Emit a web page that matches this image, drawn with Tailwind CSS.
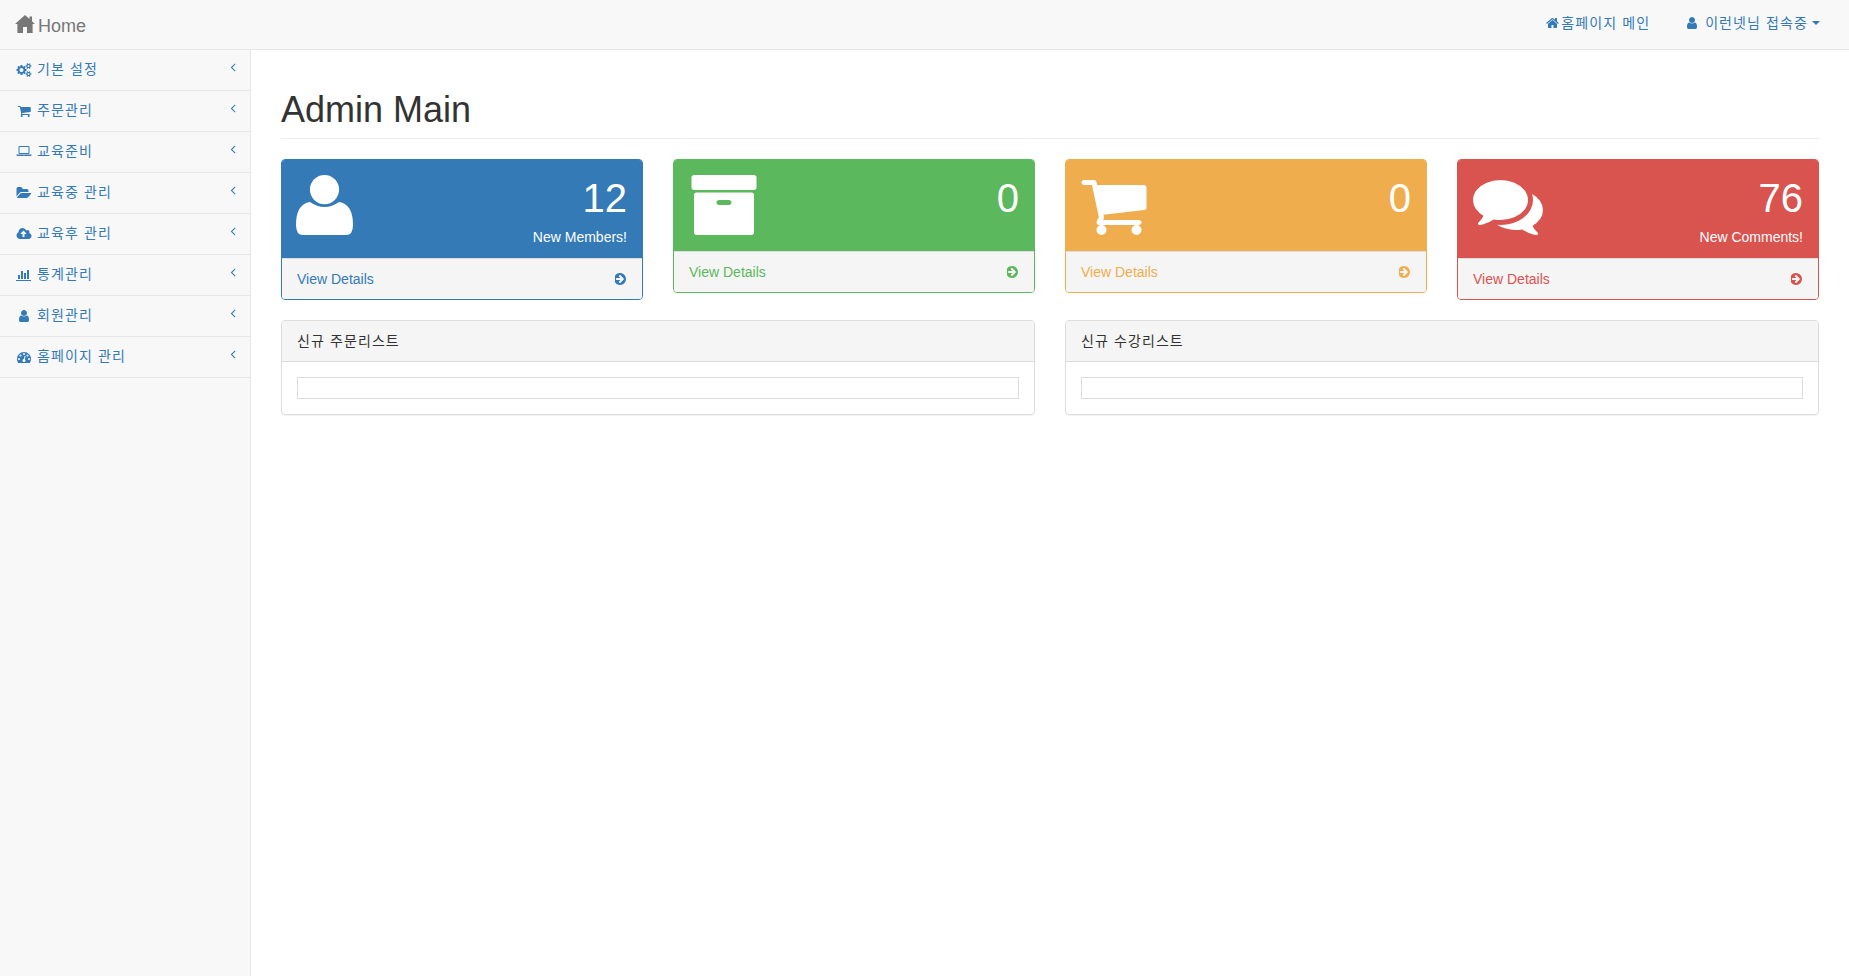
<!DOCTYPE html>
<html lang="ko">
<head>
<meta charset="utf-8">
<title>Admin Main</title>
<script src="https://cdn.jsdelivr.net/npm/@tailwindcss/browser@4"></script>
</head>
<body class="bg-white text-[14px] text-[#333] font-['Liberation_Sans','Noto_Sans_CJK_KR',sans-serif] overflow-hidden">
<div class="h-[976px] flex flex-col">
  <nav class="h-[50px] shrink-0 flex items-center justify-between bg-[#f8f8f8] border-b border-[#e7e7e7] pl-[15px] pr-[29px]">
    <a class="flex items-center text-[18px] text-[#777]">
      <svg class="w-[20px] h-[18px] mt-[-1px]" viewBox="0 0 20 18" fill="#777"><path d="M10 0 L14.5 4 V1.5 H17 V6.2 L20 9 H17.6 V18 H12 V12 H8 V18 H2.4 V9 H0 Z"/></svg>
      <span class="ml-[3px] mt-[3px]">Home</span>
    </a>
    <div class="flex items-center text-[#337ab7] mt-[-3px]">
      <svg class="w-[13px] h-[14px] fill-[#337ab7]" viewBox="100 0 1600 1792"><path d="M1472 992v480q0 26-19 45t-45 19h-384v-384h-256v384h-384q-26 0-45-19t-19-45v-480q0-1 .5-3t.5-3l575-474 575 474q1 2 1 6zm223-69l-62 74q-8 9-21 11h-3q-13 0-21-7l-692-577-692 577q-12 8-24 7-13-2-21-11l-62-74q-8-10-7-23.5t11-21.5l719-599q32-26 76-26t76 26l244 204v-195q0-14 9-23t23-9h192q14 0 23 9t9 23v408l219 182q10 8 11 21.5t-7 23.5z"/></svg>
      <span class="ml-[2px] tracking-[1.1px]">홈페이지 메인</span>
      <svg class="ml-[35px] w-[14px] h-[14px] fill-[#337ab7]" viewBox="0 0 1792 1792"><path d="M1536 1399q0 109-62.5 187t-150.5 78h-854q-88 0-150.5-78t-62.5-187q0-85 8.5-160.5t31.5-152 58.5-131 94-89 134.5-34.5q131 128 313 128t313-128q76 0 134.5 34.5t94 89 58.5 131 31.5 152 8.5 160.5zm-256-887q0 159-112.5 271.5t-271.5 112.5-271.5-112.5-112.5-271.5 112.5-271.5 271.5-112.5 271.5 112.5 112.5 271.5z"/></svg>
      <span class="ml-[6px] tracking-[1.1px]">이런넷님 접속중</span>
      <span class="ml-[4px] w-0 h-0 border-x-[4px] border-x-transparent border-t-[4px] border-t-[#337ab7]"></span>
    </div>
  </nav>
  <div class="flex flex-1 min-h-0">
    <aside class="w-[251px] shrink-0 bg-[#f8f8f8] border-r border-[#e7e7e7] text-[#337ab7]">
      <a class="flex items-center h-[41px] border-b border-[#e7e7e7] pl-[16px] pr-[10px]">
        <svg class="w-[16px] h-[14px] fill-[#337ab7]" viewBox="0 0 1920 1792"><path d="M896 896q0-106-75-181t-181-75-181 75-75 181 75 181 181 75 181-75 75-181zm768 512q0-52-38-90t-90-38-90 38-38 90q0 53 37.5 90.5t90.5 37.5 90.5-37.5 37.5-90.5zm0-1024q0-52-38-90t-90-38-90 38-38 90q0 53 37.5 90.5t90.5 37.5 90.5-37.5 37.5-90.5zm-384 421v185q0 10-7 19.5t-16 10.5l-155 24q-11 35-32 76 34 48 90 115 7 11 7 20 0 12-7 19-23 30-82.5 89.5t-78.5 59.5q-11 0-21-7l-115-90q-37 19-77 31-11 108-23 155-7 24-30 24h-186q-11 0-20-7.5t-10-17.5l-23-153q-34-10-75-31l-118 89q-7 7-20 7-11 0-21-8-144-133-144-160 0-9 7-19 10-14 41-53t47-61q-23-44-35-82l-152-24q-10-1-17-9.5t-7-19.5v-185q0-10 7-19.5t16-10.5l155-24q11-35 32-76-34-48-90-115-7-11-7-20 0-12 7-20 22-30 82-89t79-59q11 0 21 7l115 90q34-18 77-32 11-108 23-154 7-24 30-24h186q11 0 20 7.5t10 17.5l23 153q34 10 75 31l118-89q8-7 20-7 11 0 21 8 144 133 144 160 0 8-7 19-12 16-42 54t-45 60q23 48 34 82l152 23q10 2 17 10.5t7 19.5zm640 533v140q0 16-149 31-12 27-30 52 51 113 51 138 0 4-4 7-122 71-124 71-8 0-46-47t-52-68q-20 2-30 2t-30-2q-14 21-52 68t-46 47q-2 0-124-71-4-3-4-7 0-25 51-138-18-25-30-52-149-15-149-31v-140q0-16 149-31 13-29 30-52-51-113-51-138 0-4 4-7 4-2 35-20t59-34 30-16q8 0 46 46.5t52 67.5q20-2 30-2t30 2q51-71 92-112l6-2q4 0 124 70 4 3 4 7 0 25-51 138 17 23 30 52 149 15 149 31zm0-1024v140q0 16-149 31-12 27-30 52 51 113 51 138 0 4-4 7-122 71-124 71-8 0-46-47t-52-68q-20 2-30 2t-30-2q-14 21-52 68t-46 47q-2 0-124-71-4-3-4-7 0-25 51-138-18-25-30-52-149-15-149-31v-140q0-16 149-31 13-29 30-52-51-113-51-138 0-4 4-7 4-2 35-20t59-34 30-16q8 0 46 46.5t52 67.5q20-2 30-2t30 2q51-71 92-112l6-2q4 0 124 70 4 3 4 7 0 25-51 138 17 23 30 52 149 15 149 31z"/></svg>
        <span class="ml-[5px] mb-[2px] tracking-[1.1px]">기본 설정</span>
        <svg class="ml-auto w-[14px] h-[14px] mt-[-6px] fill-[#337ab7]" viewBox="0 0 1792 1792"><path d="M1203 544q0 13-10 23l-393 393 393 393q10 10 10 23t-10 23l-50 50q-10 10-23 10t-23-10l-466-466q-10-10-10-23t10-23l466-466q10-10 23-10t23 10l50 50q10 10 10 23z"/></svg>
      </a>
      <a class="flex items-center h-[41px] border-b border-[#e7e7e7] pl-[16px] pr-[10px]">
        <svg class="w-[16px] h-[14px] fill-[#337ab7]" viewBox="-96 0 1920 1792"><path d="M704 1536q0 52-38 90t-90 38-90-38-38-90 38-90 90-38 90 38 38 90zm896 0q0 52-38 90t-90 38-90-38-38-90 38-90 90-38 90 38 38 90zm128-1088v512q0 24-16.5 42.5t-40.5 21.5l-1044 122q13 60 13 70 0 16-24 64h920q26 0 45 19t19 45-19 45-45 19h-1024q-26 0-45-19t-19-45q0-11 8-31.5t16-36 21.5-40 15.5-29.5l-177-823h-204q-26 0-45-19t-19-45 19-45 45-19h256q16 0 28.5 6.5t19.5 15.5 13 24.5 8 26 5.5 29.5 4.5 26h1201q26 0 45 19t19 45z"/></svg>
        <span class="ml-[5px] mb-[2px] tracking-[1.1px]">주문관리</span>
        <svg class="ml-auto w-[14px] h-[14px] mt-[-6px] fill-[#337ab7]" viewBox="0 0 1792 1792"><path d="M1203 544q0 13-10 23l-393 393 393 393q10 10 10 23t-10 23l-50 50q-10 10-23 10t-23-10l-466-466q-10-10-10-23t10-23l466-466q10-10 23-10t23 10l50 50q10 10 10 23z"/></svg>
      </a>
      <a class="flex items-center h-[41px] border-b border-[#e7e7e7] pl-[16px] pr-[10px]">
        <svg class="w-[16px] h-[14px] fill-[#337ab7]" viewBox="0 0 1920 1792"><path d="M416 1152q-66 0-113-47t-47-113v-704q0-66 47-113t113-47h1088q66 0 113 47t47 113v704q0 66-47 113t-113 47h-1088zm-32-864v704q0 13 9.5 22.5t22.5 9.5h1088q13 0 22.5-9.5t9.5-22.5v-704q0-13-9.5-22.5t-22.5-9.5h-1088q-13 0-22.5 9.5t-9.5 22.5zm1376 928h160v96q0 40-47 68t-113 28h-1600q-66 0-113-28t-47-68v-96h1760zm-720 96q16 0 16-16t-16-16h-160q-16 0-16 16t16 16h160z"/></svg>
        <span class="ml-[5px] mb-[2px] tracking-[1.1px]">교육준비</span>
        <svg class="ml-auto w-[14px] h-[14px] mt-[-6px] fill-[#337ab7]" viewBox="0 0 1792 1792"><path d="M1203 544q0 13-10 23l-393 393 393 393q10 10 10 23t-10 23l-50 50q-10 10-23 10t-23-10l-466-466q-10-10-10-23t10-23l466-466q10-10 23-10t23 10l50 50q10 10 10 23z"/></svg>
      </a>
      <a class="flex items-center h-[41px] border-b border-[#e7e7e7] pl-[16px] pr-[10px]">
        <svg class="w-[16px] h-[14px] fill-[#337ab7]" viewBox="0 0 1920 1792"><path d="M1879 952q0 31-31 66l-336 396q-43 51-120.5 86.5t-143.5 35.5h-1088q-34 0-60.5-13t-26.5-43q0-31 31-66l336-396q43-51 120.5-86.5t143.5-35.5h1088q34 0 60.5 13t26.5 43zm-343-344v160h-832q-94 0-197 47.5t-164 119.5l-337 396-5 6q0-4-.5-12.5t-.5-12.5v-960q0-92 66-158t158-66h320q92 0 158 66t66 158v32h544q92 0 158 66t66 158z"/></svg>
        <span class="ml-[5px] mb-[2px] tracking-[1.1px]">교육중 관리</span>
        <svg class="ml-auto w-[14px] h-[14px] mt-[-6px] fill-[#337ab7]" viewBox="0 0 1792 1792"><path d="M1203 544q0 13-10 23l-393 393 393 393q10 10 10 23t-10 23l-50 50q-10 10-23 10t-23-10l-466-466q-10-10-10-23t10-23l466-466q10-10 23-10t23 10l50 50q10 10 10 23z"/></svg>
      </a>
      <a class="flex items-center h-[41px] border-b border-[#e7e7e7] pl-[16px] pr-[10px]">
        <svg class="w-[16px] h-[14px] fill-[#337ab7]" viewBox="0 0 1920 1792"><path d="M1280 864q0-14-9-23l-352-352q-9-9-23-9t-23 9l-351 351q-10 12-10 24 0 14 9 23t23 9h224v352q0 13 9.5 22.5t22.5 9.5h192q13 0 22.5-9.5t9.5-22.5v-352h224q13 0 22.5-9.5t9.5-22.5zm640 288q0 159-112.5 271.5t-271.5 112.5h-1088q-185 0-316.5-131.5t-131.5-316.5q0-130 70-240t188-165q-2-30-2-43 0-212 150-362t362-150q156 0 285.5 87t188.5 231q71-62 166-62 106 0 181 75t75 181q0 76-41 138 130 31 213.5 135.5t83.5 238.5z"/></svg>
        <span class="ml-[5px] mb-[2px] tracking-[1.1px]">교육후 관리</span>
        <svg class="ml-auto w-[14px] h-[14px] mt-[-6px] fill-[#337ab7]" viewBox="0 0 1792 1792"><path d="M1203 544q0 13-10 23l-393 393 393 393q10 10 10 23t-10 23l-50 50q-10 10-23 10t-23-10l-466-466q-10-10-10-23t10-23l466-466q10-10 23-10t23 10l50 50q10 10 10 23z"/></svg>
      </a>
      <a class="flex items-center h-[41px] border-b border-[#e7e7e7] pl-[16px] pr-[10px]">
        <svg class="w-[16px] h-[14px] fill-[#337ab7]" viewBox="0 0 2048 1792"><path d="M512 896v512h-256v-512h256zm384-512v1024h-256v-1024h256zm1024 1152v128h-2048v-1536h128v1408h1920zm-640-896v768h-256v-768h256zm384-384v1152h-256v-1152h256z"/></svg>
        <span class="ml-[5px] mb-[2px] tracking-[1.1px]">통계관리</span>
        <svg class="ml-auto w-[14px] h-[14px] mt-[-6px] fill-[#337ab7]" viewBox="0 0 1792 1792"><path d="M1203 544q0 13-10 23l-393 393 393 393q10 10 10 23t-10 23l-50 50q-10 10-23 10t-23-10l-466-466q-10-10-10-23t10-23l466-466q10-10 23-10t23 10l50 50q10 10 10 23z"/></svg>
      </a>
      <a class="flex items-center h-[41px] border-b border-[#e7e7e7] pl-[16px] pr-[10px]">
        <svg class="w-[16px] h-[14px] fill-[#337ab7]" viewBox="0 0 1920 1792"><path transform="translate(64 0)" d="M1536 1399q0 109-62.5 187t-150.5 78h-854q-88 0-150.5-78t-62.5-187q0-85 8.5-160.5t31.5-152 58.5-131 94-89 134.5-34.5q131 128 313 128t313-128q76 0 134.5 34.5t94 89 58.5 131 31.5 152 8.5 160.5zm-256-887q0 159-112.5 271.5t-271.5 112.5-271.5-112.5-112.5-271.5 112.5-271.5 271.5-112.5 271.5 112.5 112.5 271.5z"/></svg>
        <span class="ml-[5px] mb-[2px] tracking-[1.1px]">회원관리</span>
        <svg class="ml-auto w-[14px] h-[14px] mt-[-6px] fill-[#337ab7]" viewBox="0 0 1792 1792"><path d="M1203 544q0 13-10 23l-393 393 393 393q10 10 10 23t-10 23l-50 50q-10 10-23 10t-23-10l-466-466q-10-10-10-23t10-23l466-466q10-10 23-10t23 10l50 50q10 10 10 23z"/></svg>
      </a>
      <a class="flex items-center h-[41px] border-b border-[#e7e7e7] pl-[16px] pr-[10px]">
        <svg class="w-[16px] h-[14px] fill-[#337ab7]" viewBox="0 0 1792 1792"><path d="M384 1152q0-53-37.5-90.5t-90.5-37.5-90.5 37.5-37.5 90.5 37.5 90.5 90.5 37.5 90.5-37.5 37.5-90.5zm192-448q0-53-37.5-90.5t-90.5-37.5-90.5 37.5-37.5 90.5 37.5 90.5 90.5 37.5 90.5-37.5 37.5-90.5zm428 481l101-382q6-26-7.5-48.5t-38.5-29.5-48 6.5-30 39.5l-101 382q-60 5-107 43.5t-63 98.5q-20 77 20 146t117 89 146-20 89-117q16-60-6-117t-72-91zm660-33q0-53-37.5-90.5t-90.5-37.5-90.5 37.5-37.5 90.5 37.5 90.5 90.5 37.5 90.5-37.5 37.5-90.5zm-640-640q0-53-37.5-90.5t-90.5-37.5-90.5 37.5-37.5 90.5 37.5 90.5 90.5 37.5 90.5-37.5 37.5-90.5zm448 192q0-53-37.5-90.5t-90.5-37.5-90.5 37.5-37.5 90.5 37.5 90.5 90.5 37.5 90.5-37.5 37.5-90.5zm320 448q0 261-141 483-19 29-54 29h-1402q-35 0-54-29-141-221-141-483 0-182 71-348t191-286 286-191 348-71 348 71 286 191 191 286 71 348z"/></svg>
        <span class="ml-[5px] mb-[2px] tracking-[1.1px]">홈페이지 관리</span>
        <svg class="ml-auto w-[14px] h-[14px] mt-[-6px] fill-[#337ab7]" viewBox="0 0 1792 1792"><path d="M1203 544q0 13-10 23l-393 393 393 393q10 10 10 23t-10 23l-50 50q-10 10-23 10t-23-10l-466-466q-10-10-10-23t10-23l466-466q10-10 23-10t23 10l50 50q10 10 10 23z"/></svg>
      </a>
    </aside>
    <main class="flex-1 min-w-0 px-[30px]">
      <h1 class="mt-[40px] pb-[8px] border-b border-[#eee] text-[36px] leading-[40px] font-normal text-[#333]">Admin Main</h1>
      <div class="mt-[20px] grid grid-cols-4 gap-[30px] items-start">
        <div class="border border-[#337ab7] rounded-[4px] overflow-hidden">
          <div class="h-[98px] bg-[#337ab7] text-white p-[15px] flex justify-between">
            <svg class="w-[57px] h-[60px] ml-[-1px] fill-white" viewBox="0 0 57 60"><circle cx="28.5" cy="14.6" r="14.6"/><path d="M14 27 Q21 32 28.5 32 Q36 32 43 27 Q57 29 57 50 Q57 60 50 60 H7 Q0 60 0 50 Q0 29 14 27 Z"/></svg>
            <div class="text-right"><div class="text-[40px] leading-[46px]">12</div><div class="mt-[6px] leading-[20px]">New Members!</div></div>
          </div>
          <div class="h-[41px] bg-[#f5f5f5] border-t border-[#ddd] px-[15px] flex items-center justify-between text-[#337ab7]">
            <span>View Details</span>
            <svg class="w-[12px] h-[12px] fill-[#337ab7]" viewBox="128 128 1536 1536"><path d="M1285 896q0-27-18-45l-91-91-362-362q-18-18-45-18t-45 18l-91 91q-18 18-18 45t18 45l189 189h-502q-26 0-45 19t-19 45v128q0 26 19 45t45 19h502l-189 189q-19 19-19 45t19 45l91 91q18 18 45 18t45-18l362-362 91-91q18-18 18-45zm251 0q0 209-103 385.5t-279.5 279.5-385.5 103-385.5-103-279.5-279.5-103-385.5 103-385.5 279.5-279.5 385.5-103 385.5 103 279.5 279.5 103 385.5z"/></svg>
          </div>
        </div>
        <div class="border border-[#5cb85c] rounded-[4px] overflow-hidden">
          <div class="h-[91px] bg-[#5cb85c] text-white p-[15px] flex justify-between">
            <svg class="w-[70px] h-[70px] mt-[-5px] fill-white" viewBox="0 0 1792 1792"><path d="M1088 832q0-26-19-45t-45-19h-256q-26 0-45 19t-19 45 19 45 45 19h256q26 0 45-19t19-45zm576-192v960q0 26-19 45t-45 19h-1408q-26 0-45-19t-19-45v-960q0-26 19-45t45-19h1408q26 0 45 19t19 45zm64-448v256q0 26-19 45t-45 19h-1536q-26 0-45-19t-19-45v-256q0-26 19-45t45-19h1536q26 0 45 19t19 45z"/></svg>
            <div class="text-right"><div class="text-[40px] leading-[46px]">0</div></div>
          </div>
          <div class="h-[41px] bg-[#f5f5f5] border-t border-[#ddd] px-[15px] flex items-center justify-between text-[#5cb85c]">
            <span>View Details</span>
            <svg class="w-[12px] h-[12px] fill-[#5cb85c]" viewBox="128 128 1536 1536"><path d="M1285 896q0-27-18-45l-91-91-362-362q-18-18-45-18t-45 18l-91 91q-18 18-18 45t18 45l189 189h-502q-26 0-45 19t-19 45v128q0 26 19 45t45 19h502l-189 189q-19 19-19 45t19 45l91 91q18 18 45 18t45-18l362-362 91-91q18-18 18-45zm251 0q0 209-103 385.5t-279.5 279.5-385.5 103-385.5-103-279.5-279.5-103-385.5 103-385.5 279.5-279.5 385.5-103 385.5 103 279.5 279.5 103 385.5z"/></svg>
          </div>
        </div>
        <div class="border border-[#f0ad4e] rounded-[4px] overflow-hidden">
          <div class="h-[91px] bg-[#f0ad4e] text-white p-[15px] flex justify-between">
            <svg class="w-[70px] h-[70px] mt-[-5px] ml-[-2px] fill-white" viewBox="0 0 1792 1792"><path d="M704 1536q0 52-38 90t-90 38-90-38-38-90 38-90 90-38 90 38 38 90zm896 0q0 52-38 90t-90 38-90-38-38-90 38-90 90-38 90 38 38 90zm128-1088v512q0 24-16.5 42.5t-40.5 21.5l-1044 122q13 60 13 70 0 16-24 64h920q26 0 45 19t19 45-19 45-45 19h-1024q-26 0-45-19t-19-45q0-11 8-31.5t16-36 21.5-40 15.5-29.5l-177-823h-204q-26 0-45-19t-19-45 19-45 45-19h256q16 0 28.5 6.5t19.5 15.5 13 24.5 8 26 5.5 29.5 4.5 26h1201q26 0 45 19t19 45z"/></svg>
            <div class="text-right"><div class="text-[40px] leading-[46px]">0</div></div>
          </div>
          <div class="h-[41px] bg-[#f5f5f5] border-t border-[#ddd] px-[15px] flex items-center justify-between text-[#f0ad4e]">
            <span>View Details</span>
            <svg class="w-[12px] h-[12px] fill-[#f0ad4e]" viewBox="128 128 1536 1536"><path d="M1285 896q0-27-18-45l-91-91-362-362q-18-18-45-18t-45 18l-91 91q-18 18-18 45t18 45l189 189h-502q-26 0-45 19t-19 45v128q0 26 19 45t45 19h502l-189 189q-19 19-19 45t19 45l91 91q18 18 45 18t45-18l362-362 91-91q18-18 18-45zm251 0q0 209-103 385.5t-279.5 279.5-385.5 103-385.5-103-279.5-279.5-103-385.5 103-385.5 279.5-279.5 385.5-103 385.5 103 279.5 279.5 103 385.5z"/></svg>
          </div>
        </div>
        <div class="border border-[#d9534f] rounded-[4px] overflow-hidden">
          <div class="h-[98px] bg-[#d9534f] text-white p-[15px] flex justify-between">
            <svg class="w-[70px] h-[70px] mt-[-5px] fill-white" viewBox="0 0 1792 1792"><path d="M1408 768q0 139-94 257t-256.5 186.5-353.5 68.5q-86 0-176-16-124 88-278 128-36 9-86 16h-3q-11 0-20.5-8t-11.5-21q-1-3-1-6.5t.5-6.5 2-6l2.5-5 3.5-5.5 4-5 4.5-5 4-4.5q5-6 23-25t26-29.5 22.5-29 25-38.5 20.5-44q-124-72-195-177t-71-224q0-139 94-257t256.5-186.5 353.5-68.5 353.5 68.5 256.5 186.5 94 257zm384 256q0 120-71 224.5t-195 176.5q10 24 20.5 44t25 38.5 22.5 29 26 29.5 23 25q1 1 4 4.5t4.5 5 4 5 3.5 5.5l2.5 5 2 6 .5 6.5-1 6.5q-3 14-13 22t-22 7q-50-7-86-16-154-40-278-128-90 16-176 16-271 0-472-132 58 4 88 4 161 0 309-45t264-129q125-92 192-212t67-254q0-77-23-152 129 71 204 178t75 230z"/></svg>
            <div class="text-right"><div class="text-[40px] leading-[46px]">76</div><div class="mt-[6px] leading-[20px]">New Comments!</div></div>
          </div>
          <div class="h-[41px] bg-[#f5f5f5] border-t border-[#ddd] px-[15px] flex items-center justify-between text-[#d9534f]">
            <span>View Details</span>
            <svg class="w-[12px] h-[12px] fill-[#d9534f]" viewBox="128 128 1536 1536"><path d="M1285 896q0-27-18-45l-91-91-362-362q-18-18-45-18t-45 18l-91 91q-18 18-18 45t18 45l189 189h-502q-26 0-45 19t-19 45v128q0 26 19 45t45 19h502l-189 189q-19 19-19 45t19 45l91 91q18 18 45 18t45-18l362-362 91-91q18-18 18-45zm251 0q0 209-103 385.5t-279.5 279.5-385.5 103-385.5-103-279.5-279.5-103-385.5 103-385.5 279.5-279.5 385.5-103 385.5 103 279.5 279.5 103 385.5z"/></svg>
          </div>
        </div>
      </div>
      <div class="mt-[20px] grid grid-cols-2 gap-[30px]">
        <section class="border border-[#ddd] rounded-[4px] shadow-[0_1px_1px_rgba(0,0,0,0.05)]">
          <div class="h-[41px] bg-[#f5f5f5] border-b border-[#ddd] px-[15px] flex items-center tracking-[1.1px] rounded-t-[3px]">신규 주문리스트</div>
          <div class="p-[15px]"><div class="h-[22px] border border-[#ddd]"></div></div>
        </section>
        <section class="border border-[#ddd] rounded-[4px] shadow-[0_1px_1px_rgba(0,0,0,0.05)]">
          <div class="h-[41px] bg-[#f5f5f5] border-b border-[#ddd] px-[15px] flex items-center tracking-[1.1px] rounded-t-[3px]">신규 수강리스트</div>
          <div class="p-[15px]"><div class="h-[22px] border border-[#ddd]"></div></div>
        </section>
      </div>
    </main>
  </div>
</div>
</body>
</html>
